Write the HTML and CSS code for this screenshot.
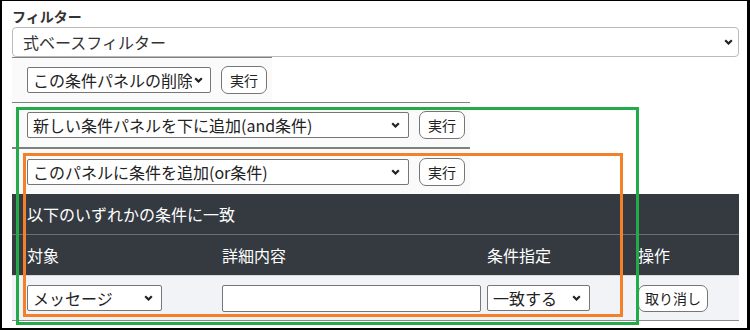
FILE: index.html
```html
<!DOCTYPE html>
<html lang="ja">
<head>
    <meta charset="UTF-8">
    <meta name="viewport" content="width=device-width, initial-scale=1.0">
    <title>フィルター</title>
    <link rel="stylesheet" href="styles.css">
</head>
<body>
    <div class="frame">
        <div class="filter-label">フィルター</div>
        <select class="filter-type">
            <option>式ベースフィルター</option>
        </select>

        <div class="panel-bar">
            <select class="bar-select sel-delete"><option>この条件パネルの削除</option></select>
            <button class="btn-round">実行</button>
        </div>
        <div class="panel-bar bar-mid">
            <select class="bar-select sel-wide"><option>新しい条件パネルを下に追加(and条件)</option></select>
            <button class="btn-round">実行</button>
        </div>
        <div class="panel-bar bar-last">
            <select class="bar-select sel-wide"><option>このパネルに条件を追加(or条件)</option></select>
            <button class="btn-round">実行</button>
        </div>

        <div class="cond-table">
            <div class="cond-title">以下のいずれかの条件に一致</div>
            <div class="cond-grid cond-head">
                <div class="cell">対象</div>
                <div class="cell">詳細内容</div>
                <div class="cell">条件指定</div>
                <div class="cell">操作</div>
            </div>
            <div class="cond-grid cond-row">
                <div class="cell">
                    <select class="bar-select sel-target"><option>メッセージ</option></select>
                </div>
                <div class="cell">
                    <input type="text" class="detail-input">
                </div>
                <div class="cell">
                    <select class="bar-select sel-match"><option>一致する</option></select>
                </div>
                <div class="cell">
                    <button class="btn-round btn-cancel">取り消し</button>
                </div>
            </div>
        </div>

        <!-- highlight boxes drawn over the panels -->
        <div class="mark mark-green"></div>
        <div class="mark mark-orange"></div>
    </div>
</body>
</html>
```

FILE: styles.css
```css
body {
    margin: 0;
    font-family: "Noto Sans CJK JP", "Noto Sans", sans-serif;
    background: #fff;
}

.frame {
    position: relative;
    box-sizing: border-box;
    width: 750px;
    height: 330px;
    border-style: solid;
    border-color: #000;
    border-width: 1px 3px 2px 2px;
    padding: 5px 8px 0 10px;
    overflow: hidden;
}

.filter-label {
    font-size: 14px;
    font-weight: bold;
    line-height: 20px;
    height: 21px;
    color: #333;
}

select {
    appearance: none;
    -webkit-appearance: none;
    font-family: inherit;
    color: #222;
    background-color: #fff;
    background-image: url("data:image/svg+xml,%3Csvg xmlns='http://www.w3.org/2000/svg' width='9' height='6' viewBox='0 0 9 6'%3E%3Cpath d='M1.2 1.2 L4.5 4.5 L7.8 1.2' fill='none' stroke='%23222' stroke-width='2.2'/%3E%3C/svg%3E");
    background-repeat: no-repeat;
    background-size: 9px 6px;
    margin: 0;
}

.filter-type {
    display: block;
    box-sizing: border-box;
    width: 100%;
    height: 30px;
    font-size: 16px;
    line-height: 20px;
    padding: 0 10px;
    border: 1px solid #bbb;
    border-radius: 4px;
    color: #333;
    background-position: right 5px center;
}

.panel-bar {
    display: flex;
    align-items: center;
    gap: 10px;
    width: fit-content;
    height: 44px;
    padding: 0 5px 0 15px;
    background: #fafafa;
    border-top: 1px solid #808080;
}

.bar-mid {
    border-bottom: 1px solid #808080;
}

.bar-last {
    height: 45px;
}

.bar-select {
    box-sizing: border-box;
    height: 26px;
    font-size: 16px;
    line-height: 20px;
    padding: 0 22px 0 5px;
    border: 1px solid #767676;
    border-radius: 2px;
    background-position: right 8px center;
}

.sel-delete {
    width: 184px;
    padding-right: 18px;
    background-position: right 7px center;
}

.sel-wide {
    width: 382px;
}

.btn-round {
    box-sizing: border-box;
    width: 46px;
    height: 28px;
    padding: 0;
    font-family: inherit;
    font-size: 14px;
    color: #222;
    background: #fff;
    border: 1px solid #767676;
    border-radius: 7px;
}

.cond-table {
    background: #343a40;
    color: #fff;
    font-size: 16px;
}

.cond-title {
    height: 40px;
    line-height: 40px;
    padding-left: 15px;
    border-bottom: 1px solid #6c6f73;
}

.cond-grid {
    display: grid;
    grid-template-columns: 195px 265px 151px 1fr;
    align-items: center;
}

.cell {
    padding-left: 15px;
}

.cond-head {
    height: 40px;
    border-bottom: 1px solid #d6d8db;
}

.cond-row {
    height: 44px;
    background: #f2f3f6;
    border-bottom: 1px solid #8a8a8a;
}

.sel-target {
    width: 135px;
}

.sel-match {
    width: 103px;
}

.detail-input {
    display: block;
    box-sizing: border-box;
    width: 259px;
    height: 27px;
    border: 1px solid #767676;
    border-radius: 2px;
    margin: 0;
}

.btn-cancel {
    width: 70px;
    height: 27px;
}

.mark {
    position: absolute;
    box-sizing: border-box;
    border-style: solid;
    border-width: 3px;
}

.mark-green {
    left: 14px;
    top: 106px;
    width: 623px;
    height: 218px;
    border-color: #22ab48;
}

.mark-orange {
    left: 21px;
    top: 152px;
    width: 600px;
    height: 164px;
    border-color: #f5802a;
}
```
